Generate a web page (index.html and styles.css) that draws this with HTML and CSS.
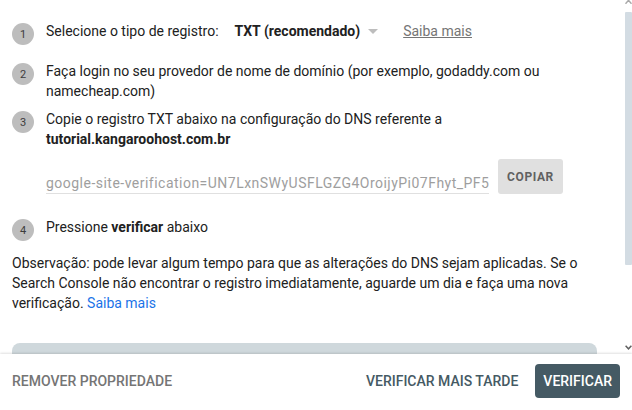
FILE: index.html
```html
<!DOCTYPE html>
<html lang="pt-BR">
<head>
<meta charset="utf-8">
<link rel="stylesheet" href="styles.css">
</head>
<body>
<div class="page">
  <div class="scroll-area">
    <div class="content">
      <div class="step step-1">
        <div class="num">1</div>
        <div class="step-body">
          <span class="label">Selecione o tipo de registro:</span>
          <span class="select">TXT (recomendado)<span class="caret"></span></span>
          <a class="more">Saiba mais</a>
        </div>
      </div>
      <div class="step step-2">
        <div class="num">2</div>
        <div class="step-body">Faça login no seu provedor de nome de domínio (por exemplo, godaddy.com ou namecheap.com)</div>
      </div>
      <div class="step step-3">
        <div class="num">3</div>
        <div class="step-body">Copie o registro TXT abaixo na configuração do DNS referente a <b>tutorial.kangaroohost.com.br</b></div>
      </div>
      <div class="copy-row">
        <div class="record">google-site-verification=UN7LxnSWyUSFLGZG4OroijyPi07Fhyt_PF5</div>
        <button class="copy">COPIAR</button>
      </div>
      <div class="step step-4">
        <div class="num">4</div>
        <div class="step-body">Pressione <b>verificar</b> abaixo</div>
      </div>
      <p class="note">Observação: pode levar algum tempo para que as alterações do DNS sejam aplicadas. Se o Search Console não encontrar o registro imediatamente, aguarde um dia e faça uma nova verificação. <a class="link">Saiba mais</a></p>
      <div class="panel"></div>
    </div>
    <div class="scrollbar">
      <svg class="arrow-up" width="7" height="4" viewBox="0 0 7 4"><polyline points="0.5,3.8 3.5,0.3 6.5,3.8" fill="none" stroke="#a8a8a8" stroke-width="1.4"/></svg>
      <div class="thumb"></div>
      <svg class="arrow-down" width="7" height="5" viewBox="0 0 7 5"><polyline points="0.6,0.8 3.5,3.8 6.4,0.8" fill="none" stroke="#616161" stroke-width="1.5"/></svg>
    </div>
  </div>
  <div class="footer">
    <button class="text-btn remove">REMOVER PROPRIEDADE</button>
    <div class="actions">
      <button class="text-btn later">VERIFICAR MAIS TARDE</button>
      <button class="primary">VERIFICAR</button>
    </div>
  </div>
</div>
</body>
</html>
```

FILE: styles.css
```css
* { box-sizing: border-box; }
html, body {
  margin: 0;
  padding: 0;
  background: #ffffff;
}
body {
  font-family: Roboto, "Liberation Sans", Arial, sans-serif;
  font-size: 14px;
  line-height: 20px;
  color: #212121;
}
.page {
  width: 632px;
  height: 410px;
  display: flex;
  flex-direction: column;
  overflow: hidden;
}
.scroll-area {
  height: 354px;
  display: flex;
  flex: none;
  overflow: hidden;
}
.content {
  flex: 1;
  padding: 21px 28px 0 12px;
  overflow: hidden;
}
.step {
  display: flex;
  align-items: flex-start;
}
.num {
  width: 22px;
  height: 22px;
  flex: none;
  margin-top: 2px;
  margin-right: 12px;
  border-radius: 50%;
  background: #bdbdbd;
  color: #3c3c3c;
  font-size: 11px;
  line-height: 22px;
  padding-top: 1px;
  text-align: center;
}
.step-body { flex: 1; }
.step-1 { margin-bottom: 16px; }
.step-2 { margin-bottom: 8px; }
.step-1 .step-body { display: flex; align-items: center; }
.select {
  font-weight: 700;
  margin-left: 16px;
  display: inline-flex;
  align-items: center;
}
.caret {
  width: 0;
  height: 0;
  margin-left: 8px;
  border-left: 5px solid transparent;
  border-right: 5px solid transparent;
  border-top: 5px solid #bdbdbd;
}
.more {
  margin-left: 25px;
  color: #757575;
  text-decoration: underline;
}
.copy-row {
  display: flex;
  align-items: flex-end;
  margin: 10px 0 0 34px;
}
.record {
  width: 443px;
  white-space: nowrap;
  overflow: hidden;
  color: #9e9e9e;
  letter-spacing: 0.48px;
  line-height: 20px;
  height: 24px;
  padding-top: 3px;
  border-bottom: 1px solid #e0e0e0;
}
.copy {
  margin-left: 9px;
  height: 35px;
  width: 65px;
  padding: 0;
  border: none;
  border-radius: 3px;
  background: #e0e0e0;
  color: #616161;
  font-family: Roboto, "Liberation Sans", Arial, sans-serif;
  font-size: 12px;
  font-weight: 700;
  letter-spacing: 0.6px;
}
.step-4 { margin-top: 23px; }
.note {
  margin: 12px 0 0 0;
}
.link { color: #1a73e8; }
.panel {
  margin-top: 30px;
  height: 60px;
  border-radius: 8px;
  background: #cfd8dc;
}
.scrollbar {
  width: 7px;
  flex: none;
  display: flex;
  flex-direction: column;
  align-items: center;
  padding-bottom: 4px;
}
.arrow-up { display: block; flex: none; }
.thumb {
  margin-top: 8px;
  width: 7px;
  height: 253px;
  background: #d3dce3;
  border-radius: 1px;
}
.arrow-down { display: block; margin-top: auto; flex: none; }
.footer {
  flex: 1;
  display: flex;
  align-items: center;
  padding: 0 12px 2px;
  box-shadow: 0 -1px 2px rgba(0,0,0,0.12);
  position: relative;
}
button {
  font-family: Roboto, "Liberation Sans", Arial, sans-serif;
  cursor: pointer;
}
.text-btn {
  background: none;
  border: none;
  font-size: 14px;
  font-weight: 500;
  padding: 0;
  line-height: 20px;
}
.remove { color: #757575; }
.actions {
  margin-left: auto;
  display: flex;
  align-items: center;
}
.later {
  color: #455a64;
  padding: 0 8px;
  height: 34px;
}
.primary {
  margin-left: 9px;
  height: 34px;
  padding: 0 8px;
  border: none;
  border-radius: 4px;
  background: #455a64;
  color: #ffffff;
  font-size: 14px;
  font-weight: 500;
}
```
